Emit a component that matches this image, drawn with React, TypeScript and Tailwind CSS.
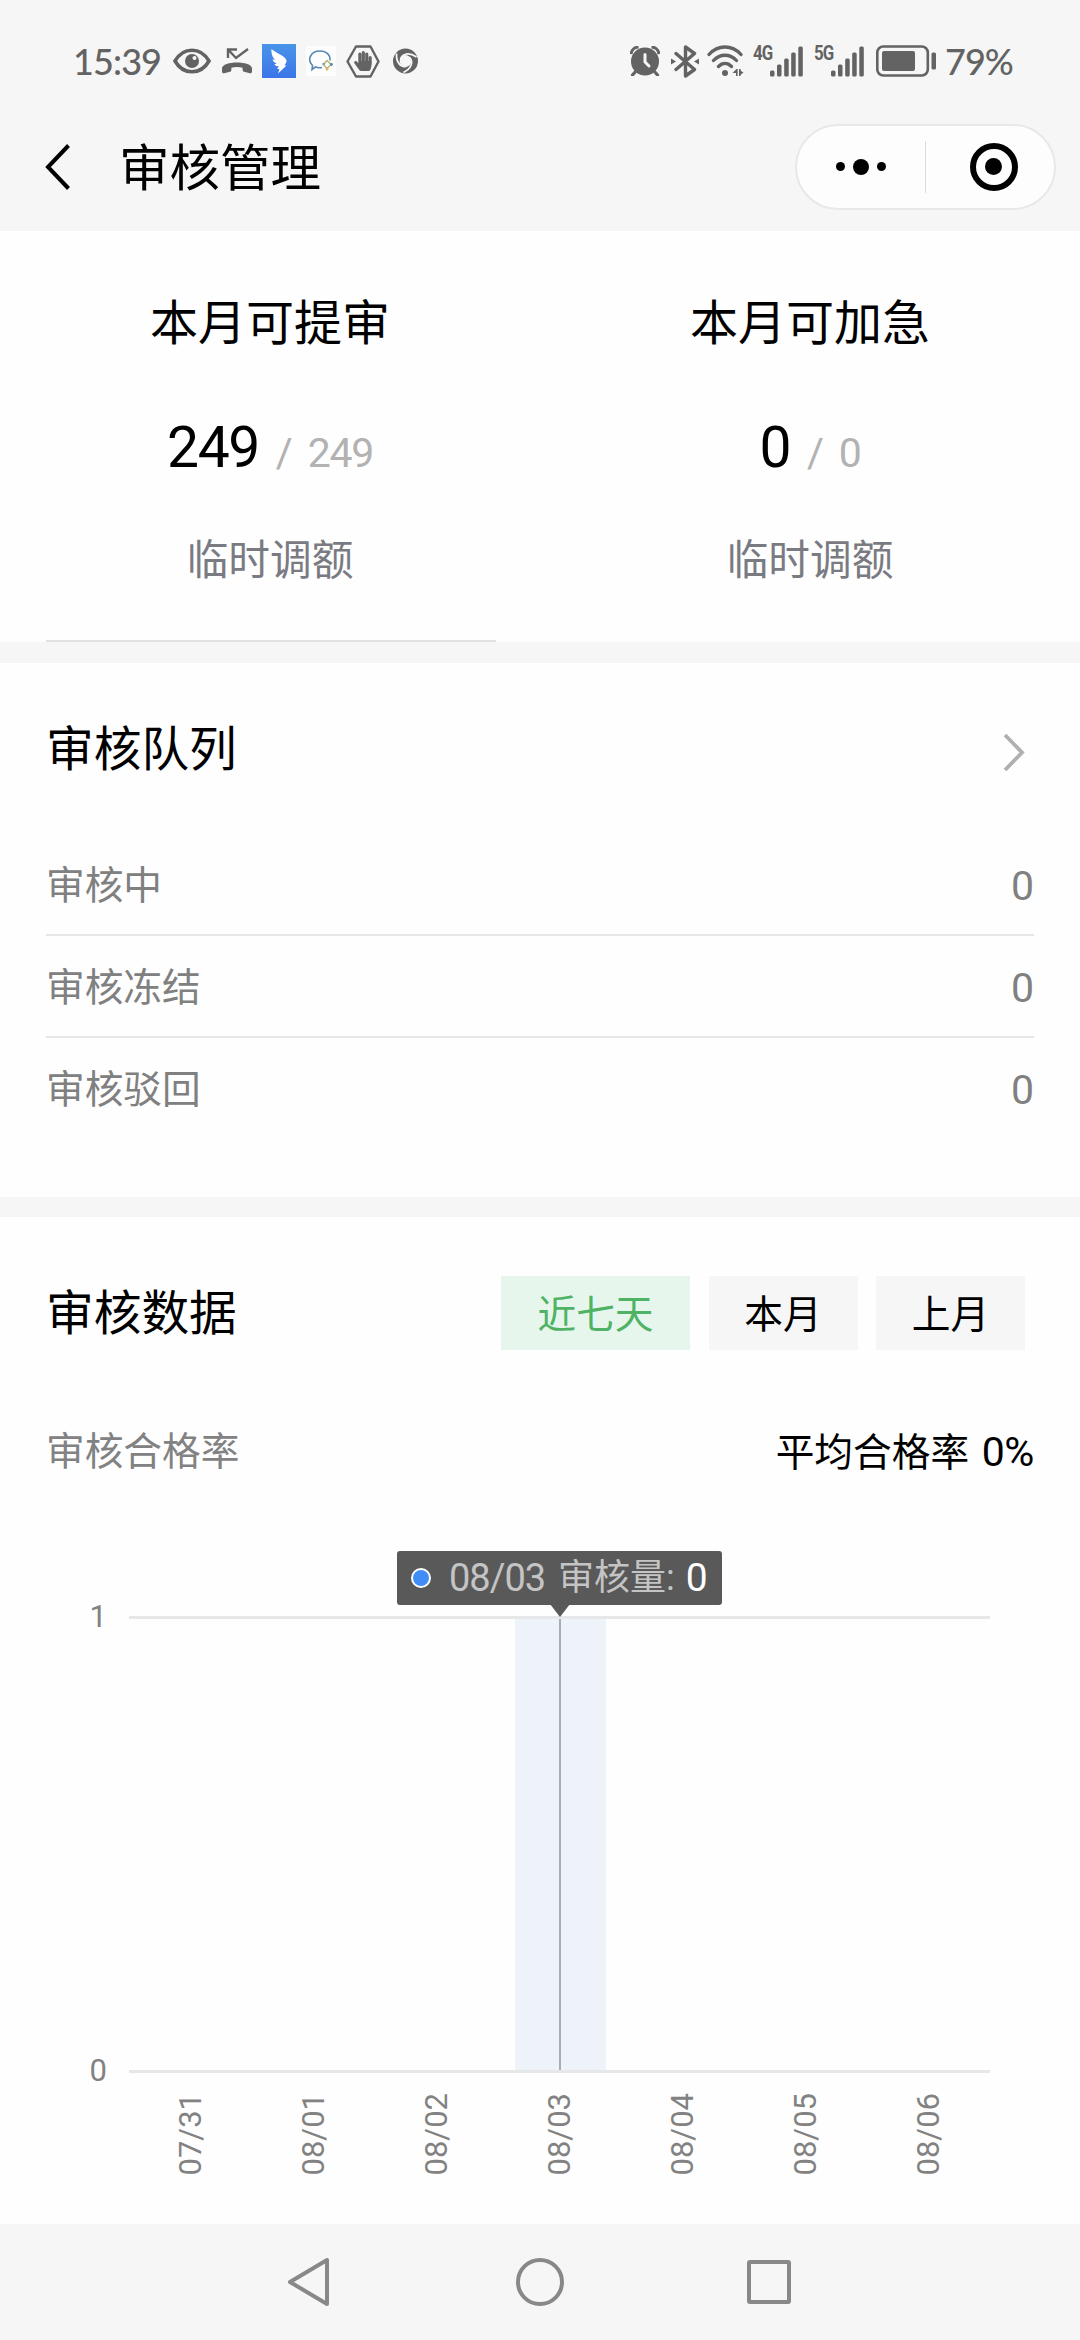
import { FaHandPaper } from 'react-icons/fa';
import clsx from 'clsx';

const QUOTAS = [
  { title: '本月可提审', left: '249', total: '249', action: '临时调额' },
  { title: '本月可加急', left: '0', total: '0', action: '临时调额' },
];

const QUEUE = [
  { label: '审核中', count: 0 },
  { label: '审核冻结', count: 0 },
  { label: '审核驳回', count: 0 },
];

const RANGES = [
  { label: '近七天', width: 'w-[189px]' },
  { label: '本月', width: 'w-[149px]' },
  { label: '上月', width: 'w-[149px]' },
];

const DATES = ['07/31', '08/01', '08/02', '08/03', '08/04', '08/05', '08/06'];

const SWIRL_ANGLES = [0, 120, 240];

function SignalBars({ label }: { label: string }) {
  return (
    <div className="flex h-[31px] items-start">
      <span className="w-[17px] origin-top-left scale-x-[0.84] text-[20px] leading-[15px] font-bold tracking-[-1px]">
        {label}
      </span>
      <svg width="33" height="31" viewBox="0 0 33 31" fill="currentColor">
        <rect x="0" y="24.500" width="4.500" height="6" rx="1.500" />
        <rect x="7" y="18.500" width="4.500" height="12" rx="1.500" />
        <rect x="14.200" y="12.500" width="4.500" height="18" rx="1.500" />
        <rect x="21.200" y="6.500" width="4.500" height="24" rx="1.500" />
        <rect x="28.300" y="0.500" width="4.500" height="30" rx="1.500" />
      </svg>
    </div>
  );
}

function StatusBar() {
  return (
    <div className="flex h-[122px] items-center justify-between pr-[66px] pl-[73px] text-[#636363]">
      <div className="flex items-center">
        <span className="w-[100px] font-['Lato','Noto_Sans_CJK_SC',sans-serif] text-[36px] leading-[40px] font-medium tracking-[-0.900px]">
          15:39
        </span>
        <svg width="38" height="26" viewBox="0 0 38 26" fill="none">
          <path
            d="M2 13C6 6 12 2.200 19 2.200S32 6 36 13C32 20 26 23.800 19 23.800S6 20 2 13Z"
            stroke="currentColor"
            strokeWidth="3.600"
          />
          <circle cx="19" cy="13" r="7" fill="currentColor" />
          <circle cx="21.500" cy="10" r="2" fill="#f6f6f6" />
        </svg>
        <svg className="ml-[10px]" width="32" height="26" viewBox="0 0 32 26" fill="none">
          <path d="M7 10V1.500H16M7.500 2L15 10L27 1" stroke="currentColor" strokeWidth="2.400" />
          <path
            d="M1 20.500C1 12.500 31 12.500 31 20.500V23.500C31 25 30 25.500 29 25.200L23 23.700C22 23.400 21.600 22.700 21.600 21.500V19.700C18 18.600 14 18.600 10.400 19.700V21.500C10.400 22.700 10 23.400 9 23.700L3 25.200C2 25.500 1 25 1 23.500Z"
            fill="currentColor"
          />
        </svg>
        <svg className="ml-[9px]" width="34" height="34" viewBox="0 0 34 34">
          <defs>
            <linearGradient id="wing" x1="0" y1="0" x2="0" y2="1">
              <stop offset="0" stopColor="#4a94ea" />
              <stop offset="1" stopColor="#3a75e8" />
            </linearGradient>
          </defs>
          <rect width="34" height="34" fill="url(#wing)" />
          <path
            d="M9.500 5C12 8 19 10 23 14C24.500 15.800 25 17 24.200 18.500L22.500 21.500H24.500L16 29.500L17.500 25H15L17 22.500C14.500 22.500 12.500 21 12.500 20L15 19.700C12 18.500 10.800 17 10.600 15.500L13 15.700C10.500 13.500 9 9 9.500 5Z"
            fill="#fff"
          />
        </svg>
        <div className="ml-[10px] flex size-[30px] items-center justify-center bg-[#fdfdfd]">
          <svg width="26" height="24" viewBox="0 0 26 24" fill="none">
            <path
              d="M14 18.500C11.500 19 9.500 18.800 7.500 18L4 20.500L4.500 16.500C-1 11.500 2 2 12 2C18.500 2 22.500 6 22 11.500"
              stroke="#5487b4"
              strokeWidth="1.600"
            />
            <path d="M19 11.500L23 15.500L19 19.500L15.500 15.500Z" stroke="#b9b56c" strokeWidth="1.400" />
            <circle cx="15.500" cy="15" r="1.200" fill="#6f9fc4" />
            <circle cx="23.500" cy="15.500" r="1.400" fill="#5487b4" />
            <circle cx="19" cy="20" r="1.500" fill="#e6ad62" />
          </svg>
        </div>
        <div className="relative ml-[10px] h-[33px] w-[34px]">
          <svg width="34" height="33" viewBox="0 0 34 33" fill="none">
            <path
              d="M10 1.500H24.500L32.500 16.500L24.500 31.500H10L1.500 16.500Z"
              stroke="currentColor"
              strokeWidth="2.400"
              strokeLinejoin="round"
            />
          </svg>
          <FaHandPaper className="absolute top-[6px] left-[7px] size-[20px]" />
        </div>
        <svg className="ml-[12px]" width="27" height="26" viewBox="0 0 27 26" fill="none">
          <circle cx="13.500" cy="13" r="9.200" stroke="currentColor" strokeWidth="6.600" />
          {SWIRL_ANGLES.map((angle) => (
            <path
              key={angle}
              d="M8.500 11C10.500 5.500 17 4 24.500 9"
              stroke="#f6f6f6"
              strokeWidth="1.800"
              transform={`rotate(${angle} 13.5 13)`}
            />
          ))}
        </svg>
      </div>

      <div className="flex items-center">
        <svg width="30" height="30" viewBox="0 0 30 30" fill="none">
          <circle cx="15" cy="15.500" r="14" fill="currentColor" />
          <path d="M1 8C1.500 4 4.500 1.200 8.500 1M29 8C28.500 4 25.500 1.200 21.500 1" stroke="currentColor" strokeWidth="3" />
          <path d="M6 25L2.500 29M24 25L27.500 29" stroke="currentColor" strokeWidth="3.200" strokeLinecap="round" />
          <path d="M15 8.500V16L19 20" stroke="#f6f6f6" strokeWidth="3" strokeLinecap="round" />
        </svg>
        <svg className="ml-[11px]" width="28" height="33" viewBox="0 0 28 33" fill="none">
          <path
            d="M5 8.500L23.500 24.500L14.500 31V2L23.500 8.500L5 24.500"
            stroke="currentColor"
            strokeWidth="3.400"
            strokeLinejoin="round"
            strokeLinecap="round"
          />
          <path d="M0 13.500L5 16.500L0 19.500ZM28 13.500L23 16.500L28 19.500Z" fill="currentColor" />
        </svg>
        <svg className="ml-[8px]" width="37" height="32" viewBox="0 0 37 32" fill="none">
          <path
            d="M2 9.500C11 -0.500 25 -0.500 34 9.500M6.500 15.500C13 8.500 23 8.500 29.500 15.500M11.500 21.500C15.500 17.500 20.500 17.500 24.500 21.500"
            stroke="currentColor"
            strokeWidth="3.300"
            strokeLinecap="round"
          />
          <circle cx="18" cy="28" r="3" fill="currentColor" />
          <path d="M29.500 24L25.500 28H30.500ZM32.500 30.500V25L36.500 27.500Z" fill="currentColor" />
          <path d="M29.800 24V31M32.800 24V31" stroke="currentColor" strokeWidth="1.600" />
        </svg>
        <div className="ml-[9px]">
          <SignalBars label="4G" />
        </div>
        <div className="ml-[11px]">
          <SignalBars label="5G" />
        </div>
        <svg className="ml-[12px]" width="61" height="32" viewBox="0 0 61 32" fill="none">
          <rect x="1.300" y="1.500" width="50.500" height="29" rx="6" stroke="currentColor" strokeWidth="2.600" />
          <rect x="6" y="6" width="33" height="20" rx="2" fill="currentColor" />
          <rect x="55.500" y="7.500" width="4.500" height="17" rx="1.500" fill="currentColor" />
        </svg>
        <span className="ml-[8px] w-[69px] font-['Lato','Noto_Sans_CJK_SC',sans-serif] text-[36px] leading-[40px] font-medium tracking-[-1px]">
          79%
        </span>
      </div>
    </div>
  );
}

function TitleBar() {
  return (
    <div className="flex h-[109px] items-center pr-[24px] pb-[20px] pl-[45px]">
      <svg width="26" height="46" viewBox="0 0 26 46" fill="none">
        <path d="M23.500 1.500L3 23L23.500 44.500" stroke="#000" strokeWidth="4" />
      </svg>
      <h1 className="ml-[48px] pt-[4px] text-[50.500px] leading-[72px]">审核管理</h1>
      <div className="ml-auto flex h-[86px] w-[261px] items-center rounded-full border-2 border-[#e8e8e8] bg-[#fdfdfd]">
        <div className="flex w-[128px] items-center justify-center gap-[8px]">
          <i className="size-[9px] rounded-full bg-black" />
          <i className="size-[16px] rounded-full bg-black" />
          <i className="size-[9px] rounded-full bg-black" />
        </div>
        <i className="h-[52px] w-px bg-[#dcdcdc]" />
        <div className="flex flex-1 items-center justify-center pl-[7px]">
          <div className="flex size-[48px] items-center justify-center rounded-full border-[6px] border-black">
            <i className="size-[17px] rounded-full bg-black" />
          </div>
        </div>
      </div>
    </div>
  );
}

function QuotaSection() {
  return (
    <section className="h-[411px] pt-[57px]">
      <div className="flex h-[352px]">
        {QUOTAS.map((item) => (
          <div key={item.title} className="flex flex-1 flex-col items-center">
            <h2 className="text-[48px] leading-[72px]">{item.title}</h2>
            <p className="mt-[52px] flex h-[72px] items-baseline leading-[72px]">
              <span className="text-[57px] tracking-[-1.500px]">{item.left}</span>
              <span className="ml-[17px] text-[41px] text-[#b2b2b2]">/</span>
              <span className="ml-[15px] text-[41px] tracking-[-1.300px] text-[#b2b2b2]">{item.total}</span>
            </p>
            <p className="mt-[47px] text-[41.700px] leading-[60px] text-[#7a7b82]">{item.action}</p>
          </div>
        ))}
      </div>
      <div className="ml-[46px] h-[2px] w-[450px] bg-[#e2e2e2]" />
    </section>
  );
}

function QueueSection() {
  return (
    <section className="h-[534px] px-[46px] pt-[51px]">
      <div className="flex items-center justify-between pr-[9px]">
        <h2 className="text-[47.700px] leading-[72px]">审核队列</h2>
        <svg className="mt-[3px]" width="22" height="38" viewBox="0 0 22 38" fill="none">
          <path d="M2 2L19 19.500L2 37" stroke="#b0b0b0" strokeWidth="3.800" />
        </svg>
      </div>
      <ul className="mt-[48px]">
        {QUEUE.map((row) => (
          <li
            key={row.label}
            className="flex h-[102px] items-center justify-between border-b-2 border-[#e6e6e6] pt-[4px] text-[38.700px] leading-[60px] text-[#808080] last:border-transparent"
          >
            <span>{row.label}</span>
            <span className="text-[41px]">{row.count}</span>
          </li>
        ))}
      </ul>
    </section>
  );
}

function Tooltip() {
  return (
    <div className="absolute top-[-68px] left-[268px] h-[54px] w-[325px] rounded-[3px] bg-[#595959]">
      <div className="flex h-full items-center pl-[14px] text-[36px] leading-[54px] whitespace-pre text-[#c4c4c4]">
        <i className="size-[20px] rounded-full border-2 border-white bg-[#418df8]" />
        <span className="ml-[18px] text-[38px] tracking-[-1px]">08/03</span>
        <span className="ml-[13px]">审核量:</span>
        <span className="ml-[11px] text-[39px] text-white">0</span>
      </div>
      <svg className="absolute top-[53px] left-[153px]" width="20" height="13" viewBox="0 0 20 13">
        <path d="M0 0H20L10 13Z" fill="#595959" />
      </svg>
    </div>
  );
}

function RateChart() {
  return (
    <div className="mt-[135px] text-[31px] text-[#828282]">
      <div className="flex h-[457px]">
        <div className="-mt-px mb-px flex w-[129px] flex-col justify-between pr-[22px] text-right leading-[3px]">
          <span>1</span>
          <span>0</span>
        </div>
        <div className="relative w-[861px] border-y-[3px] border-[#e6e7e9]">
          <div className="absolute top-0 left-[386px] h-full w-[91px] bg-[#eef2f9]" />
          <div className="absolute top-0 left-[430px] h-full w-[2px] bg-[#a9acb2]" />
          <Tooltip />
        </div>
      </div>
      <div className="mt-[20px] ml-[129px] flex w-[861px]">
        {DATES.map((date) => (
          <div key={date} className="flex flex-1 justify-center">
            <span className="rotate-180 leading-[36px] [writing-mode:vertical-rl]">{date}</span>
          </div>
        ))}
      </div>
    </div>
  );
}

function DataSection() {
  return (
    <section className="h-[1007px] pt-[59px]">
      <div className="flex h-[74px] items-center justify-between pr-[55px] pl-[46px]">
        <h2 className="pt-[2px] text-[47.700px] leading-[72px]">审核数据</h2>
        <div className="flex gap-[18.500px]">
          {RANGES.map((range, index) => (
            <button
              key={range.label}
              className={clsx(
                'h-[74px] pt-[3px] text-[38.700px] leading-[60px]',
                range.width,
                index === 0 ? 'bg-[#e6f6ec] text-[#4fb264]' : 'bg-[#f6f6f6] text-black',
              )}
            >
              {range.label}
            </button>
          ))}
        </div>
      </div>
      <div className="mt-[72px] flex h-[59px] justify-between px-[46px] text-[38.700px] leading-[60px]">
        <span className="text-[#828282]">审核合格率</span>
        <span>
          平均合格率 <span className="ml-[3px] text-[41px] tracking-[-0.400px]">0%</span>
        </span>
      </div>
      <RateChart />
    </section>
  );
}

function SystemNav() {
  return (
    <nav className="flex h-[116px] items-center justify-center gap-[181px] bg-[#f6f6f6] text-[#888]">
      <svg width="48" height="52" viewBox="0 0 48 52" fill="none" stroke="currentColor" strokeWidth="4">
        <path d="M40 4V48L3 26Z" strokeLinejoin="round" />
      </svg>
      <svg width="48" height="48" viewBox="0 0 48 48" fill="none" stroke="currentColor" strokeWidth="4">
        <circle cx="24" cy="24" r="22" />
      </svg>
      <svg width="48" height="48" viewBox="0 0 48 48" fill="none" stroke="currentColor" strokeWidth="4">
        <rect x="4" y="4" width="40" height="40" rx="1" />
      </svg>
    </nav>
  );
}

export default function App() {
  return (
    <div className="h-[2340px] w-[1080px] overflow-hidden bg-[#fefefe] font-['Roboto','Noto_Sans_CJK_SC',sans-serif] text-black">
      <header className="bg-[#f6f6f6]">
        <StatusBar />
        <TitleBar />
      </header>
      <QuotaSection />
      <div className="h-[21px] bg-[#f6f6f6]" />
      <QueueSection />
      <div className="h-[20px] bg-[#f6f6f6]" />
      <DataSection />
      <SystemNav />
    </div>
  );
}
